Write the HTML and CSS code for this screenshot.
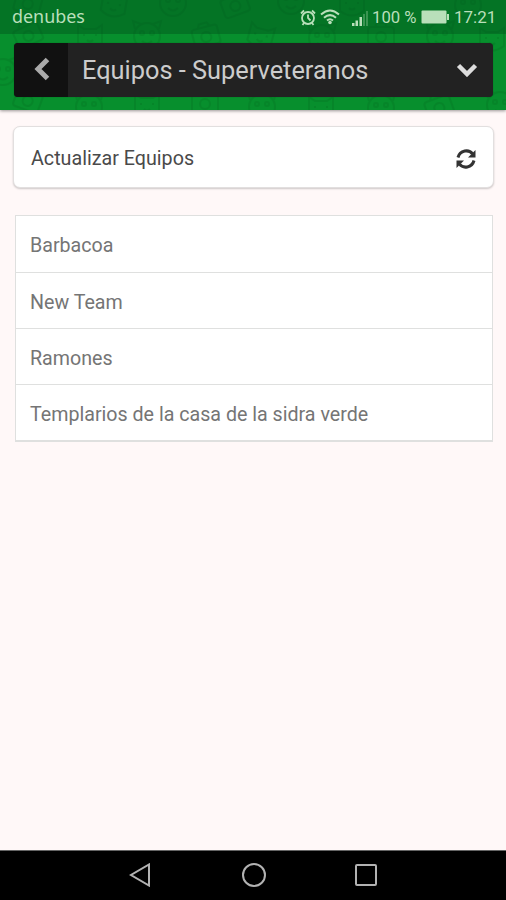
FILE: index.html
```html
<!DOCTYPE html>
<html lang="es">
<head>
<meta charset="utf-8">
<title>Equipos</title>
<link rel="stylesheet" href="styles.css">
</head>
<body>
<div class="screen">
  <header class="header">
    <svg class="pattern" viewBox="0 0 506 110" aria-hidden="true">
      <defs>
        <g id="face"><circle r="13"/><path d="M-12-7l-2-8 8 3M12-7l2-8-8 3M-5 5q5 5 10 0"/><circle cx="-5" cy="-3" r="2"/><circle cx="5" cy="-3" r="2"/></g>
        <g id="cam"><rect x="-13" y="-9" width="26" height="19" rx="3"/><circle cy="1" r="5"/><path d="M-6-9l2-4h8l2 4"/></g>
        <g id="cat"><path d="M-12 8v-18l6 4h12l6-4V8q-12 9-24 0zM-6-1v2M6-1v2M-3 5q3 3 6 0"/></g>
      </defs>
      <use href="#cam" transform="translate(28 3) rotate(15)"/>
      <use href="#cat" transform="translate(114 4) rotate(10)"/>
      <use href="#face" transform="translate(173 3)"/>
      <use href="#cam" transform="translate(235 5) rotate(-20)"/>
      <use href="#face" transform="translate(291 1)"/>
      <use href="#cat" transform="translate(352 3)"/>
      <use href="#face" transform="translate(468 5)"/>
      <use href="#cam" transform="translate(28 35) rotate(-25)"/>
      <use href="#cat" transform="translate(90 35)"/>
      <use href="#face" transform="translate(147 36)"/>
      <use href="#cam" transform="translate(206 36) rotate(-15)"/>
      <use href="#cat" transform="translate(261 35) rotate(15)"/>
      <use href="#face" transform="translate(322 38)"/>
      <use href="#cam" transform="translate(381 36)"/>
      <use href="#face" transform="translate(440 36)"/>
      <use href="#cat" transform="translate(492 38)"/>
      <use href="#face" transform="translate(3 72)"/>
      <use href="#cam" transform="translate(28 100) rotate(20)"/>
      <use href="#face" transform="translate(89 107)"/>
      <use href="#cat" transform="translate(147 104)"/>
      <use href="#cam" transform="translate(205 103)"/>
      <use href="#face" transform="translate(262 107)"/>
      <use href="#cat" transform="translate(321 107)"/>
      <use href="#face" transform="translate(381 108)"/>
      <use href="#cam" transform="translate(439 107) rotate(-20)"/>
      <use href="#face" transform="translate(500 105)"/>
    </svg>
    <div class="status">
      <span class="carrier">denubes</span>
      <svg class="alarm" viewBox="0 0 16 17"><circle cx="8" cy="9" r="6"/><path d="M8 5.500V9l2.500 2.500M1 4.500l3-3M15 4.500l-3-3M4 14l-1.500 2M12 14l1.500 2"/></svg>
      <svg class="wifi" viewBox="0 0 20 16"><path d="M1 5.500Q10-2.500 19 5.500M4 8.700Q10 3.500 16 8.700M7 11.500Q10 9 13 11.500"/><circle cx="10" cy="13.500" r="1.800"/></svg>
      <svg class="signal" viewBox="0 0 16 15"><path d="M0 12h2.500v3H0zM3.500 9.500H6V15H3.500zM7.500 6H10v9H7.500z"/><path class="dim" d="M11 3h2v12h-2zM14 0h2v15h-2z"/></svg>
      <span class="percent">100 %</span>
      <svg class="battery" viewBox="0 0 28 14"><rect x=".5" y=".5" width="25" height="13" rx="1"/><path d="M26 4h2v6h-2z"/></svg>
      <span class="clock">17:21</span>
    </div>
    <nav class="bar">
      <div class="back"><svg viewBox="0 0 16 24"><path d="M13.500 2.500L4 12l9.500 9.500"/></svg></div>
      <h1 class="title">Equipos - Superveteranos</h1>
      <svg class="more" viewBox="0 0 22 14"><path d="M2.500 2.500L11 11l8.500-8.500"/></svg>
    </nav>
  </header>
  <main class="content">
    <div class="refresh">
      <span>Actualizar Equipos</span>
      <svg viewBox="0 0 20 20"><g id="arrow"><path class="arc" d="M2 8.500C4 1 13 0 16.500 5"/><path d="M19.500 1v7.500H12z"/></g><use href="#arrow" transform="rotate(180 10 10)"/></svg>
    </div>
    <ul class="teams">
      <li>Barbacoa</li>
      <li>New Team</li>
      <li>Ramones</li>
      <li>Templarios de la casa de la sidra verde</li>
    </ul>
  </main>
  <footer class="keys">
    <svg viewBox="0 0 24 24"><path d="M20 1.500v21L2 12z"/></svg>
    <svg viewBox="0 0 24 24"><circle cx="12" cy="12" r="11"/></svg>
    <svg viewBox="0 0 24 24"><rect x="2" y="2" width="20" height="20" rx="1"/></svg>
  </footer>
</div>
</body>
</html>
```
FILE: styles.css
```css
* { box-sizing: border-box; }
body { margin: 0; font-family: Roboto, "Liberation Sans", sans-serif; }
svg { display: block; flex: none; }
.screen { width: 506px; height: 900px; display: flex; flex-direction: column; background: #fff8f8; }
.header { position: relative; height: 110px; background: #078f2d; box-shadow: 0 1px 3px rgba(0,0,0,.4); }
.pattern { position: absolute; top: 0; left: 0; width: 506px; height: 110px; overflow: hidden; fill: none; stroke: #04601d; stroke-width: 2; opacity: .2; }
.status { position: relative; height: 34px; background: rgba(0,70,25,.36); display: flex; align-items: center; padding: 0 11px 0 12px; color: #b9dfba; font-size: 17.500px; }
.carrier { flex: 1; font-family: "Noto Sans", sans-serif; font-size: 17.900px; line-height: 32px; height: 34px; }
.alarm { width: 16px; height: 17px; fill: none; stroke: #b9dfba; stroke-width: 1.800; }
.wifi { width: 20px; height: 16px; margin-left: 4px; fill: none; stroke: #b9dfba; stroke-width: 2; }
.wifi circle { fill: #b9dfba; stroke: none; }
.signal { width: 16px; height: 15px; margin: 2px 4px 0 12px; fill: #b9dfba; }
.signal .dim { opacity: .3; }
.percent { width: 46px; white-space: nowrap; font-size: 16.700px; }
.battery { width: 28px; height: 14px; margin: 0 5px 0 3px; fill: #b9dfba; }
.clock { width: 41px; white-space: nowrap; font-size: 17px; }
.bar { position: relative; height: 54px; margin: 9px 13px 0 14px; display: flex; align-items: center; background: #222; border-radius: 4px; overflow: hidden; box-shadow: 0 0 1px rgba(0,50,15,.5); }
.back { width: 54px; height: 54px; background: #111; padding: 14px 0 0 20px; }
.back svg { width: 16px; height: 24px; fill: none; stroke: #aaa; stroke-width: 5; }
.title { flex: 1; margin: 0 0 0 14px; font-size: 25.350px; font-weight: 400; color: #ccc; white-space: nowrap; }
.more { width: 22px; height: 14px; margin-right: 15px; fill: none; stroke: #ddd; stroke-width: 4.500; }
.content { flex: 1; padding: 16px 12px 0 13px; }
.refresh { height: 62px; display: flex; align-items: center; justify-content: space-between; padding: 2px 17px 0 17px; background: #fff; border: 1px solid #e2dfdf; border-radius: 7px; box-shadow: 0 1px 2px rgba(0,0,0,.2); color: #4a4a4a; font-size: 19.700px; }
.refresh svg { width: 20px; height: 20px; margin-top: 2px; fill: #333; }
.refresh .arc { fill: none; stroke: #333; stroke-width: 3; }
.teams { list-style: none; margin: 27px 1px 0 2px; padding: 0; border: 1px solid #dfe0df; border-width: 1px 1px 2px 1px; background: #fff; color: #757575; font-size: 19.650px; }
.teams li { height: 56px; line-height: 60px; padding-left: 14px; }
.teams li + li { border-top: 1px solid #dfe0df; }
.keys { height: 50px; background: #000; border-top: 1px solid #666; display: flex; justify-content: center; align-items: center; gap: 88.500px; padding: 0 0 2px 1px; }
.keys svg { width: 24px; height: 24px; fill: none; stroke: #b2b2b2; stroke-width: 2; }
```
